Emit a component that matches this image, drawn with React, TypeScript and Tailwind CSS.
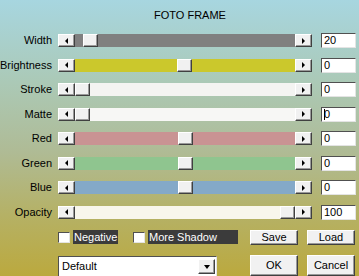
import React from 'react';

type Row = { label: string; track: string; pos: number; value: string; cursor?: boolean };

const rows: Row[] = [
  { label: 'Width', track: 'bg-[#808080]', pos: 8, value: '20' },
  { label: 'Brightness', track: 'bg-[#cbc82c]', pos: 102, value: '0' },
  { label: 'Stroke', track: 'bg-[#f4f4f2]', pos: 0, value: '0' },
  { label: 'Matte', track: 'bg-[#f7f7f5]', pos: 0, value: '0', cursor: true },
  { label: 'Red', track: 'bg-[#c99393]', pos: 103, value: '0' },
  { label: 'Green', track: 'bg-[#8fc58f]', pos: 103, value: '0' },
  { label: 'Blue', track: 'bg-[#84a9c8]', pos: 103, value: '0' },
  { label: 'Opacity', track: 'bg-[#f8f6ec]', pos: 205, value: '100' },
];

const raised =
  'border border-t-white border-l-white border-r-[#404040] border-b-[#404040] bg-[#f1f1f1] shadow-[inset_-1px_-1px_0_#9a9a9a]';
const sunken =
  'border border-t-[#505050] border-l-[#505050] border-r-[#e4e4e4] border-b-[#e4e4e4] bg-white';

function Slider({ row }: { row: Row }) {
  return (
    <div className="flex h-[13px] w-[254px] shrink-0">
      <div className={`flex w-[17px] items-center justify-center ${raised}`}>
        <div className="h-0 w-0 border-y-[3px] border-r-[3px] border-y-transparent border-r-black" />
      </div>
      <div className={`flex w-[220px] ${row.track}`}>
        <div className="shrink-0" style={{ width: row.pos }} />
        <div className={`w-[15px] shrink-0 ${raised}`} />
      </div>
      <div className={`flex w-[17px] items-center justify-center ${raised}`}>
        <div className="h-0 w-0 border-y-[3px] border-l-[3px] border-y-transparent border-l-black" />
      </div>
    </div>
  );
}

function Check({ label, width }: { label: string; width: string }) {
  return (
    <div className="flex h-[14px] items-center">
      <div className={`h-[11px] w-[12px] shrink-0 ${sunken}`} />
      <div className={`ml-[3px] flex h-[14px] items-center bg-[#3b3b3b] pl-[1px] text-white ${width}`}>{label}</div>
    </div>
  );
}

export default function App() {
  return (
    <div
      className="flex h-[276px] w-[359px] flex-col overflow-hidden bg-[linear-gradient(to_bottom,#a7d6e0_0%,#abc9b6_30%,#afbb95_55%,#b5b165_78%,#bba93e_100%)] text-[11px] leading-[13px] text-black"
      style={{ fontFamily: '"Liberation Sans", Arial, sans-serif' }}
    >
      <div className="mt-[9px] h-[13px] pl-[21px] text-center">FOTO FRAME</div>

      <div className="mt-[12px] flex flex-col gap-[11.5px]">
        {rows.map((row) => (
          <div key={row.label} className="flex h-[13px] items-center">
            <div className="w-[52px] shrink-0 text-right">{row.label}</div>
            <div className="ml-[6px]">
              <Slider row={row} />
            </div>
            <div className={`ml-[9px] flex h-[15px] w-[35px] shrink-0 items-center pl-[2px] ${sunken}`}>
              {row.cursor && <div className="mr-[-1px] h-[11px] w-[1px] bg-black" />}
              {row.value}
            </div>
          </div>
        ))}
      </div>

      <div className="mt-[11.5px] flex">
        <div className="ml-[58px] flex w-[180px] shrink-0 flex-col">
          <div className="flex h-[14px] items-center gap-[15px]">
            <Check label="Negative" width="w-[45px]" />
            <Check label="More Shadow" width="w-[90px]" />
          </div>
          <div className={`mt-[12px] flex h-[22px] w-[159px] items-start ${sunken}`}>
            <div className="flex-1 pl-[3px] pt-[3px]">Default</div>
            <div className={`mr-[1px] mt-[2px] flex h-[15px] w-[17px] items-center justify-center ${raised}`}>
              <div className="h-0 w-0 border-x-[3.5px] border-t-[4px] border-x-transparent border-t-black" />
            </div>
          </div>
        </div>
        <div className="ml-[12px] grid grid-cols-[48px_48px] gap-x-[9px] gap-y-[7px]">
          <button className={`h-[15px] ${raised} leading-[13px]`}>Save</button>
          <button className={`h-[15px] ${raised} leading-[13px]`}>Load</button>
          <button className={`h-[21px] ${raised}`}>OK</button>
          <button className={`h-[21px] ${raised}`}>Cancel</button>
        </div>
      </div>
    </div>
  );
}
